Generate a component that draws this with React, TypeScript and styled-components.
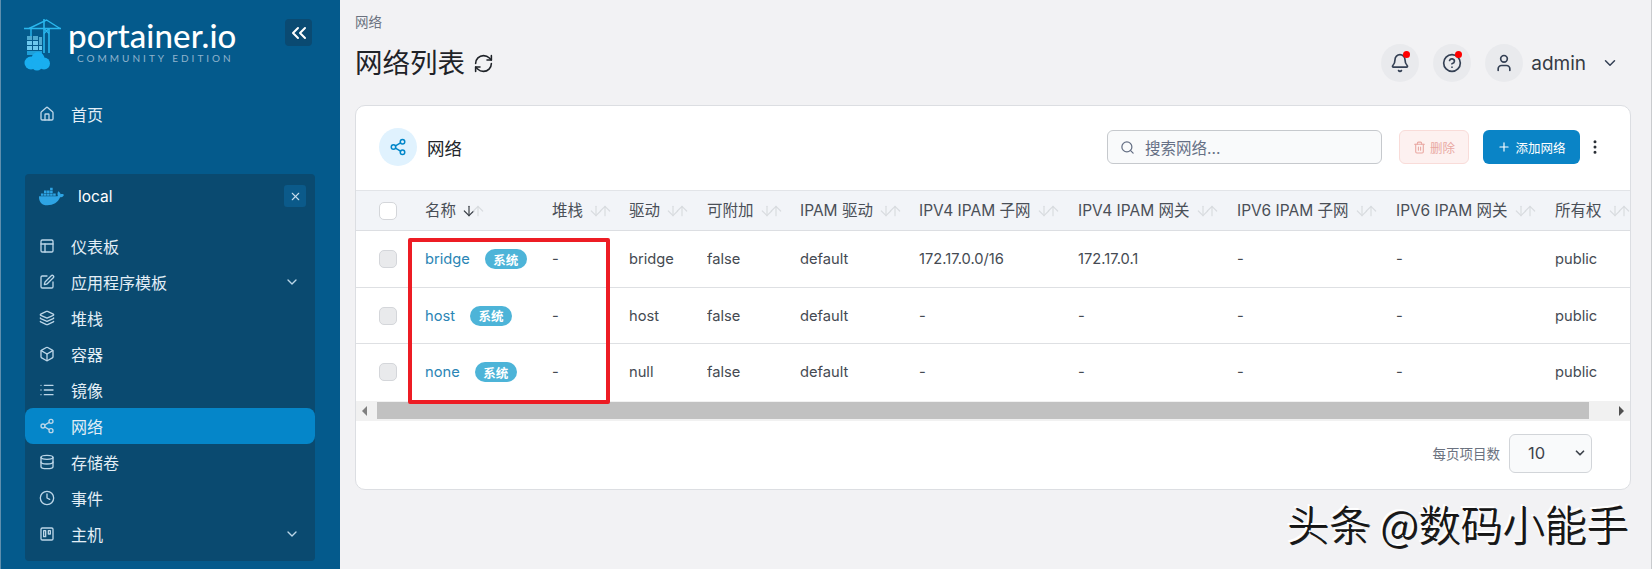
import React from "react";
import styled, { createGlobalStyle } from "styled-components";
import {
  ArrowDown, ArrowUp, Bell, Box, ChevronDown, ChevronsLeft, CircleHelp, Clock, Database,
  Home, Layers, Layout, List, MoreVertical, Plus, RefreshCw, Search, Share2, SquarePen,
  Trash2, Trello, User, X,
} from "lucide-react";
import { FaDocker } from "react-icons/fa";

const FONT = `Inter, "Noto Sans CJK SC", sans-serif`;

const Global = createGlobalStyle`
  html, body { margin: 0; padding: 0; height: 569px; overflow: hidden; background: #f2f2f4; }
  body { font-family: ${FONT}; }
  * { box-sizing: border-box; }
`;

const Page = styled.div`
  position: relative;
  display: flex;
  width: 1652px;
  height: 569px;
  overflow: hidden;
`;

const Sidebar = styled.aside`
  width: 340px;
  height: 569px;
  flex: none;
  background: #045a8c;
  border-left: 1px solid #5f8fae;
  padding: 0 25px 0 24px;
  color: #e3eef6;
`;

const Brand = styled.div`
  height: 96px;
  display: flex;
  align-items: flex-start;
  justify-content: space-between;
  padding-top: 19px;
`;

const LogoWrap = styled.div`
  display: flex;
  margin-left: -1px;
`;

const LogoText = styled.div`
  display: flex;
  flex-direction: column;
  margin-left: 6px;
  margin-top: 1px;
`;

const LogoName = styled.span`
  font-family: Lato, sans-serif;
  font-size: 33px;
  line-height: 31px;
  font-weight: 500;
  letter-spacing: 0.1px;
  color: #fff;
`;

const LogoSub = styled.span`
  font-family: Lato, sans-serif;
  font-size: 10px;
  line-height: 10px;
  letter-spacing: 3px;
  margin-left: 9px;
  margin-top: 2px;
  color: #8fb3cc;
  white-space: nowrap;
`;

const Collapse = styled.div`
  width: 27px;
  height: 27px;
  margin-right: 3px;
  border-radius: 4px;
  background: #0a4a72;
  color: #fff;
  display: flex;
  align-items: center;
  justify-content: center;
`;

const NavItem = styled.div<{ $active?: boolean }>`
  height: 36px;
  display: flex;
  align-items: center;
  padding: 0 15px 0 14px;
  border-radius: 8px;
  font-size: 16px;
  background: ${(p) => (p.$active ? "#0586c9" : "transparent")};
  svg.lead { color: #bcd6e8; margin-right: 16px; flex: none; }
`;

const NavLabel = styled.span`
  flex: 1;
`;

const EnvBox = styled.div`
  margin-top: 42px;
  height: 387px;
  background: #0a4a70;
  border-radius: 4px;
`;

const EnvHead = styled.div`
  height: 54px;
  display: flex;
  align-items: center;
  padding: 0 9px 10px 14px;
  font-size: 15.5px;
  color: #fff;
`;

const EnvName = styled.span`
  flex: 1;
  margin-left: 14px;
`;

const EnvClose = styled.div`
  width: 22px;
  height: 22px;
  border-radius: 3px;
  background: #0b5a8a;
  display: flex;
  align-items: center;
  justify-content: center;
  color: #c6dceb;
`;

const Main = styled.main`
  flex: 1;
  height: 569px;
  padding: 0 20px 0 15px;
  border-right: 1px solid #c9cbce;
  margin-right: 2px;
`;

const TopBar = styled.div`
  height: 105px;
  display: flex;
  justify-content: space-between;
`;

const Heading = styled.div`
  padding-top: 14px;
`;

const Crumb = styled.div`
  font-size: 13.5px;
  line-height: 16px;
  color: #6b7280;
`;

const Title = styled.h1`
  margin: 14px 0 0;
  font-size: 27.5px;
  line-height: 38px;
  font-weight: 400;
  color: #1f2328;
  display: flex;
  align-items: center;
  gap: 8px;
`;

const UserBar = styled.div`
  display: flex;
  align-items: center;
  height: 38px;
  margin-top: 44px;
  margin-right: 12px;
  color: #344054;
`;

const RoundIcon = styled.div<{ $dot?: boolean }>`
  position: relative;
  width: 38px;
  height: 38px;
  margin-right: 14px;
  border-radius: 50%;
  background: #e9eaed;
  display: flex;
  align-items: center;
  justify-content: center;
  &:last-of-type { margin-right: 8px; }
  &::after {
    content: "";
    display: ${(p) => (p.$dot ? "block" : "none")};
    position: absolute;
    top: 7px;
    right: 9px;
    width: 7px;
    height: 7px;
    border-radius: 50%;
    background: #f00;
  }
`;

const UserName = styled.span`
  font-size: 19px;
  margin-right: 15px;
  color: #353b44;
`;

const Card = styled.section`
  width: 1276px;
  height: 385px;
  background: #fff;
  border: 1px solid #dcdee2;
  border-radius: 10px;
  overflow: hidden;
`;

const CardHead = styled.div`
  height: 84px;
  display: flex;
  align-items: center;
  padding: 0 26px 2px 23px;
`;

const HeadIcon = styled.div`
  width: 38px;
  height: 38px;
  border-radius: 50%;
  background: #e0f2fe;
  color: #0086c9;
  display: flex;
  align-items: center;
  justify-content: center;
  margin-right: 10px;
`;

const CardTitle = styled.div`
  flex: 1;
  font-size: 17.5px;
  color: #22262b;
`;

const SearchBox = styled.div`
  width: 275px;
  height: 34px;
  border: 1px solid #c6c9cd;
  border-radius: 6px;
  background: #f9fafb;
  color: #667085;
  font-size: 15.5px;
  display: flex;
  align-items: center;
  gap: 10px;
  padding-left: 12px;
  margin-right: 17px;
`;

const DangerBtn = styled.div`
  width: 70px;
  height: 34px;
  border: 1px solid #f9dcd9;
  border-radius: 6px;
  background: #fdf1f0;
  color: #e9a8a2;
  font-size: 12.5px;
  display: flex;
  align-items: center;
  justify-content: center;
  gap: 4px;
  margin-right: 14px;
`;

const PrimaryBtn = styled.div`
  width: 97px;
  height: 34px;
  border-radius: 6px;
  background: #0a84c6;
  color: #fff;
  font-size: 12.5px;
  display: flex;
  align-items: center;
  justify-content: center;
  gap: 4px;
  margin-right: 6px;
`;

const Table = styled.table`
  width: 1275px;
  table-layout: fixed;
  border-collapse: collapse;
  font-size: 14.7px;
`;

const HeadRow = styled.tr`
  height: 40px;
  background: #f2f4f8;
  border-top: 1px solid #e2e4e8;
  border-bottom: 1px solid #dcdee2;
  color: #4a4f57;
`;

const Th = styled.th`
  padding: 0 0 3px;
  font-weight: 400;
  font-size: 15.5px;
  text-align: left;
  white-space: nowrap;
  overflow: hidden;
`;

const CheckTh = styled(Th)`
  padding: 0;
`;

const BodyRow = styled.tr<{ $h: number }>`
  height: ${(p) => p.$h}px;
  border-bottom: 1px solid #dee0e3;
  &:last-child { border-bottom: 0; }
  color: #454a52;
`;

const Td = styled.td`
  padding: 0;
  white-space: nowrap;
  overflow: hidden;
`;

const NameCell = styled.div`
  display: flex;
  align-items: center;
`;

const Check = styled.div<{ $head?: boolean }>`
  width: 18px;
  height: 18px;
  margin-left: 23px;
  border-radius: 5px;
  border: 1px solid #d4d6da;
  background: ${(p) => (p.$head ? "#fff" : "#e9eaec")};
`;

const NameLink = styled.span`
  color: #2b85b5;
`;

const Badge = styled.span`
  display: inline-flex;
  align-items: center;
  justify-content: center;
  width: 42px;
  height: 20px;
  margin-left: 15px;
  border-radius: 10px;
  background: #4db4d8;
  color: #fff;
  font-size: 12.5px;
  font-weight: 700;
`;

const SortIcons = styled.span<{ $on?: boolean }>`
  display: inline-flex;
  vertical-align: -3px;
  margin-left: 5px;
  color: #d9dce0;
  svg { margin-right: -7px; }
  svg:first-child { color: ${(p) => (p.$on ? "#3c4149" : "#d9dce0")}; }
`;

const ScrollBar = styled.div`
  height: 20px;
  background: #f1f1f1;
  display: flex;
  align-items: center;
`;

const ScrollEnd = styled.div<{ $w: number; $right?: boolean }>`
  width: ${(p) => p.$w}px;
  height: 100%;
  display: flex;
  align-items: center;
  justify-content: ${(p) => (p.$right ? "flex-end" : "flex-start")};
  padding: 0 6px;
`;

const Arrow = styled.i<{ $right?: boolean }>`
  width: 0;
  height: 0;
  border-top: 5px solid transparent;
  border-bottom: 5px solid transparent;
  ${(p) => (p.$right ? "border-left: 5px solid #505050;" : "border-right: 5px solid #808080;")}
`;

const ScrollThumb = styled.div`
  width: 1213px;
  height: 17px;
  background: #c1c1c1;
`;

const Footer = styled.div`
  height: 74px;
  display: flex;
  align-items: center;
  justify-content: flex-end;
  padding: 0 38px 9px 0;
  font-size: 13.5px;
  color: #6b7280;
  gap: 9px;
`;

const PageSelect = styled.div`
  width: 83px;
  height: 39px;
  border: 1px solid #d2d5d9;
  border-radius: 6px;
  background: #f9fafb;
  color: #3f444c;
  font-size: 16.5px;
  display: flex;
  align-items: center;
  justify-content: space-between;
  padding: 0 4px 0 18px;
`;

const Marker = styled.div`
  position: absolute;
  left: 408px;
  top: 238px;
  width: 202px;
  height: 166px;
  border: 4px solid #ed1c24;
  border-radius: 2px;
  pointer-events: none;
`;

const Watermark = styled.div`
  position: absolute;
  left: 1287px;
  top: 498px;
  font-family: "Noto Sans CJK SC", sans-serif;
  font-size: 42px;
  line-height: 50px;
  font-weight: 300;
  white-space: nowrap;
  color: #151515;
  text-shadow: -2px -2px 0 #fff, 1px 1px 0 #222;
`;

const PortainerMark = () => (
  <svg width="38" height="52" viewBox="0 0 38 52" fill="none">
    <g stroke="#2ab7ee" strokeWidth="1.4">
      <path d="M0 9.5H37" strokeWidth="1.6" />
      <path d="M20 0v34" strokeWidth="1.6" />
      <path d="M25 9.5V34" strokeWidth="1.6" />
      <path d="M5 9.5L22.5 1L36 9.5" />
      <path d="M20 9.5l5 5M25 9.5l-5 5M7 9.5V17" />
    </g>
    <g fill="#6cc8ee">
      <rect x="3" y="17" width="5" height="4" fill="#4fa9d0" />
      <rect x="9" y="17" width="5" height="4" fill="#4fa9d0" />
      <rect x="3" y="22" width="5" height="4" />
      <rect x="9" y="22" width="5" height="4" />
      <rect x="15" y="18" width="3" height="8" fill="#4fa9d0" />
      <rect x="3" y="27" width="5" height="4" />
      <rect x="9" y="27" width="5" height="4" />
      <rect x="15" y="27" width="3" height="4" />
    </g>
    <path d="M3 32h15v4H3z" fill="#1f9fd8" />
    <g fill="#19aef0">
      <circle cx="7" cy="44" r="6.5" />
      <circle cx="14" cy="39.5" r="6.5" />
      <circle cx="20" cy="44.5" r="6" />
      <circle cx="13" cy="46" r="5.5" />
    </g>
  </svg>
);

const nav = [
  { icon: Layout, label: "仪表板" },
  { icon: SquarePen, label: "应用程序模板", more: true },
  { icon: Layers, label: "堆栈" },
  { icon: Box, label: "容器" },
  { icon: List, label: "镜像" },
  { icon: Share2, label: "网络", active: true },
  { icon: Database, label: "存储卷" },
  { icon: Clock, label: "事件" },
  { icon: Trello, label: "主机", more: true },
];

const cols = [69, 127, 77, 78, 93, 119, 159, 159, 159, 159, 76];
const heads = ["名称", "堆栈", "驱动", "可附加", "IPAM 驱动", "IPV4 IPAM 子网", "IPV4 IPAM 网关", "IPV6 IPAM 子网", "IPV6 IPAM 网关", "所有权"];
const rows = [
  { name: "bridge", driver: "bridge", subnet: "172.17.0.0/16", gw: "172.17.0.1", h: 57 },
  { name: "host", driver: "host", subnet: "-", gw: "-", h: 56 },
  { name: "none", driver: "null", subnet: "-", gw: "-", h: 57 },
];

export default function App() {
  return (
    <Page>
      <Global />
      <Sidebar>
        <Brand>
          <LogoWrap>
            <PortainerMark />
            <LogoText>
              <LogoName>portainer.io</LogoName>
              <LogoSub>COMMUNITY EDITION</LogoSub>
            </LogoText>
          </LogoWrap>
          <Collapse><ChevronsLeft size={24} strokeWidth={2} /></Collapse>
        </Brand>
        <NavItem>
          <Home className="lead" size={16} />
          <NavLabel>首页</NavLabel>
        </NavItem>
        <EnvBox>
          <EnvHead>
            <FaDocker size={25} color="#2ea4e4" />
            <EnvName>local</EnvName>
            <EnvClose><X size={13} /></EnvClose>
          </EnvHead>
          {nav.map(({ icon: Icon, label, more, active }) => (
            <NavItem key={label} $active={active}>
              <Icon className="lead" size={16} />
              <NavLabel>{label}</NavLabel>
              {more && <ChevronDown size={16} color="#bcd6e8" />}
            </NavItem>
          ))}
        </EnvBox>
      </Sidebar>
      <Main>
        <TopBar>
          <Heading>
            <Crumb>网络</Crumb>
            <Title>网络列表 <RefreshCw size={21} strokeWidth={1.8} /></Title>
          </Heading>
          <UserBar>
            <RoundIcon $dot><Bell size={20} /></RoundIcon>
            <RoundIcon $dot><CircleHelp size={20} /></RoundIcon>
            <RoundIcon><User size={20} /></RoundIcon>
            <UserName>admin</UserName>
            <ChevronDown size={18} />
          </UserBar>
        </TopBar>
        <Card>
          <CardHead>
            <HeadIcon><Share2 size={18} /></HeadIcon>
            <CardTitle>网络</CardTitle>
            <SearchBox><Search size={15} />搜索网络...</SearchBox>
            <DangerBtn><Trash2 size={13} />删除</DangerBtn>
            <PrimaryBtn><Plus size={14} />添加网络</PrimaryBtn>
            <MoreVertical size={18} color="#2a2f36" />
          </CardHead>
          <Table>
            <colgroup>
              {cols.map((w, i) => <col key={i} style={{ width: w }} />)}
            </colgroup>
            <thead>
              <HeadRow>
                <CheckTh><Check $head /></CheckTh>
                {heads.map((h, i) => (
                  <Th key={h}>
                    {h}
                    <SortIcons $on={i === 0}>
                      <ArrowDown size={16} strokeWidth={1.8} />
                      <ArrowUp size={16} strokeWidth={1.8} />
                    </SortIcons>
                  </Th>
                ))}
              </HeadRow>
            </thead>
            <tbody>
              {rows.map((r) => (
                <BodyRow key={r.name} $h={r.h}>
                  <Td><Check /></Td>
                  <Td><NameCell><NameLink>{r.name}</NameLink><Badge>系统</Badge></NameCell></Td>
                  <Td>-</Td>
                  <Td>{r.driver}</Td>
                  <Td>false</Td>
                  <Td>default</Td>
                  <Td>{r.subnet}</Td>
                  <Td>{r.gw}</Td>
                  <Td>-</Td>
                  <Td>-</Td>
                  <Td>public</Td>
                </BodyRow>
              ))}
            </tbody>
          </Table>
          <ScrollBar>
            <ScrollEnd $w={21}><Arrow /></ScrollEnd>
            <ScrollThumb />
            <ScrollEnd $w={41} $right><Arrow $right /></ScrollEnd>
          </ScrollBar>
          <Footer>
            每页项目数
            <PageSelect>10<ChevronDown size={14} strokeWidth={3} /></PageSelect>
          </Footer>
        </Card>
      </Main>
      <Marker />
      <Watermark>头条 @数码小能手</Watermark>
    </Page>
  );
}
